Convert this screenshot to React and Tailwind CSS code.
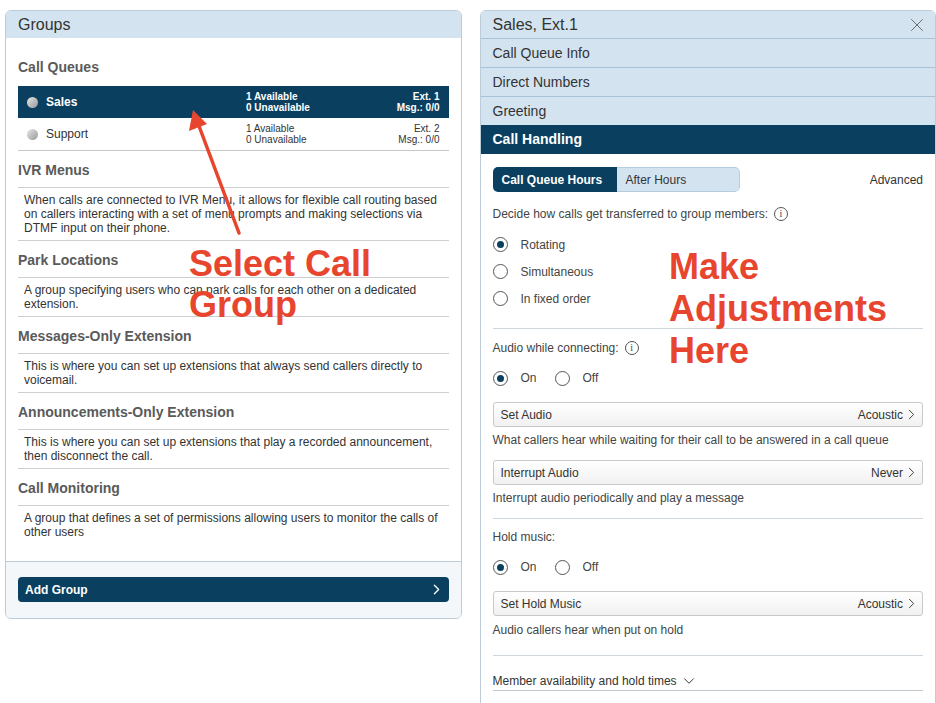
import { ChevronRight, ChevronDown, X } from 'lucide-react'

const queues = [
  { name: 'Sales', ext: 'Ext. 1', active: true },
  { name: 'Support', ext: 'Ext. 2', active: false },
]

const sections = [
  {
    title: 'IVR Menus',
    text: 'When calls are connected to IVR Menu, it allows for flexible call routing based on callers interacting with a set of menu prompts and making selections via DTMF input on their phone.',
  },
  {
    title: 'Park Locations',
    text: 'A group specifying users who can park calls for each other on a dedicated extension.',
  },
  {
    title: 'Messages-Only Extension',
    text: 'This is where you can set up extensions that always send callers directly to voicemail.',
  },
  {
    title: 'Announcements-Only Extension',
    text: 'This is where you can set up extensions that play a recorded announcement, then disconnect the call.',
  },
  {
    title: 'Call Monitoring',
    text: 'A group that defines a set of permissions allowing users to monitor the calls of other users',
  },
]

function Radio({ checked }) {
  return (
    <span className="w-[15px] h-[15px] rounded-full border border-[#555] bg-white flex items-center justify-center shrink-0">
      {checked && <span className="w-[7px] h-[7px] rounded-full bg-[#0b3f5f]" />}
    </span>
  )
}

function InfoIcon() {
  return (
    <span className="ml-[6px] w-[14px] h-[14px] rounded-full border border-[#555] inline-flex items-center justify-center text-[10px] leading-none text-[#444] font-['Liberation_Serif',serif]">
      i
    </span>
  )
}

function OnOff() {
  return (
    <div className="flex items-center h-[26px]">
      <Radio checked />
      <span className="ml-[13px]">On</span>
      <span className="ml-[18px]"><Radio /></span>
      <span className="ml-[13px]">Off</span>
    </div>
  )
}

function SelectButton({ label, value }) {
  return (
    <div className="h-[25px] flex items-center justify-between px-[7px] border border-[#c9c9c9] rounded-[3px] bg-gradient-to-b from-white to-[#f1f1f1] text-[#333]">
      <span>{label}</span>
      <span className="flex items-center">
        {value}
        <ChevronRight size={17} strokeWidth={1.3} className="-mr-[5px]" />
      </span>
    </div>
  )
}

export default function App() {
  return (
    <div className="relative h-[703px] w-[936px] overflow-hidden bg-white font-['Liberation_Sans',Arial,sans-serif] text-[#333]">
      <div className="flex items-start pt-[10px] pl-[5px] gap-[18px]">
        {/* Groups panel */}
        <div className="w-[457px] border border-[#bccbd8] rounded-[6px] overflow-hidden bg-white">
          <div className="h-[27px] bg-[#d3e4f0] px-[12px] flex items-center text-[16px] text-[#333]">Groups</div>
          <div className="px-[12px] pb-[17px]">
            <div className="h-[48px] pt-[10px] flex items-center text-[14px] font-bold text-[#5a5a5a]">Call Queues</div>
            {queues.map((q) => (
              <div
                key={q.name}
                className={`flex items-center h-[32px] px-[9px] ${q.active ? 'bg-[#0b3f5f] text-white font-bold' : 'h-[33px] border-b border-[#c8c8c8] text-[#333]'}`}
              >
                <span className="w-[11px] h-[11px] rounded-full bg-gradient-to-br from-[#e6e6e6] to-[#9a9a9a]" />
                <span className="ml-[8px] w-[200px] text-[12px]">{q.name}</span>
                <div className="text-[10px] leading-[11px]">
                  <div>1 Available</div>
                  <div>0 Unavailable</div>
                </div>
                <div className="ml-auto text-right text-[10px] leading-[11px]">
                  <div>{q.ext}</div>
                  <div>Msg.: 0/0</div>
                </div>
              </div>
            ))}
            {sections.map((s, i) => (
              <div key={s.title}>
                <div className="h-[37px] pt-[2px] flex items-center text-[14px] font-bold text-[#5a5a5a] border-b border-[#cfcfcf]">{s.title}</div>
                <p className={`px-[6px] py-[5px] text-[12px] leading-[14px] text-[#333] ${i < sections.length - 1 ? 'border-b border-[#cfcfcf]' : ''}`}>
                  {s.text}
                </p>
              </div>
            ))}
          </div>
          <div className="border-t border-[#bccbd8] bg-[#f4f7fa] px-[12px] pt-[15px] pb-[16px]">
            <button className="w-full h-[25px] rounded-[4px] bg-[#0b3f5f] text-white text-[12px] font-bold flex items-center justify-between px-[7px]">
              <span>Add Group</span>
              <ChevronRight size={17} strokeWidth={1.8} className="-mr-[3px]" />
            </button>
          </div>
        </div>

        {/* Sales detail panel */}
        <div className="w-[457px] h-[760px] border border-[#bccbd8] rounded-t-[6px] overflow-hidden bg-white">
          <div className="h-[27px] bg-[#d3e4f0] px-[12px] flex items-center justify-between text-[16px] text-[#333]">
            <span>Sales, Ext.1</span>
            <X size={22} strokeWidth={0.9} className="text-[#555] -mr-[5px]" />
          </div>
          {['Call Queue Info', 'Direct Numbers', 'Greeting'].map((t) => (
            <div key={t} className="h-[29px] bg-[#d3e4f0] border-t border-[#a9c2d5] px-[12px] flex items-center text-[14px] text-[#333]">
              {t}
            </div>
          ))}
          <div className="h-[29px] bg-[#0b3f5f] px-[12px] flex items-center text-[14px] font-bold text-white">Call Handling</div>

          <div className="px-[12px] pt-[13px] text-[12px] text-[#444]">
            <div className="flex items-center justify-between">
              <div className="flex h-[25px] rounded-[5px] overflow-hidden">
                <span className="w-[124px] bg-[#0b3f5f] text-white font-bold flex items-center pl-[9px]">Call Queue Hours</span>
                <span className="w-[123px] bg-[#d3e4f0] border border-l-0 border-[#b6cde0] rounded-r-[5px] text-[#333] flex items-center pl-[9px]">After Hours</span>
              </div>
              <span className="text-[#333]">Advanced</span>
            </div>

            <div className="mt-[12px] h-[20px] flex items-center">
              Decide how calls get transferred to group members:
              <InfoIcon />
            </div>
            <div className="mt-[7px]">
              {['Rotating', 'Simultaneous', 'In fixed order'].map((o, i) => (
                <div key={o} className="h-[27px] flex items-center">
                  <Radio checked={i === 0} />
                  <span className="ml-[13px]">{o}</span>
                </div>
              ))}
            </div>
            <div className="mt-[16px] border-t border-[#cfd6dc]" />

            <div className="mt-[9px] h-[20px] flex items-center">
              Audio while connecting:
              <InfoIcon />
            </div>
            <div className="mt-[7px]"><OnOff /></div>
            <div className="mt-[11px]"><SelectButton label="Set Audio" value="Acoustic" /></div>
            <div className="mt-[3px] h-[20px] flex items-center">What callers hear while waiting for their call to be answered in a call queue</div>
            <div className="mt-[10px]"><SelectButton label="Interrupt Audio" value="Never" /></div>
            <div className="mt-[3px] h-[20px] flex items-center">Interrupt audio periodically and play a message</div>
            <div className="mt-[10px] border-t border-[#cfd6dc]" />

            <div className="mt-[8px] h-[20px] flex items-center">Hold music:</div>
            <div className="mt-[7px]"><OnOff /></div>
            <div className="mt-[11px]"><SelectButton label="Set Hold Music" value="Acoustic" /></div>
            <div className="mt-[4px] h-[20px] flex items-center">Audio callers hear when put on hold</div>
            <div className="mt-[15px] border-t border-[#cfd6dc]" />

            <div className="mt-[15px] h-[20px] flex items-center border-b border-[#bfc6cc] text-[#333]">
              Member availability and hold times
              <ChevronDown size={18} strokeWidth={1.3} className="ml-[3px]" />
            </div>
          </div>
        </div>
      </div>

      {/* Annotations */}
      <svg className="absolute left-0 top-0 pointer-events-none" width="936" height="703">
        <line x1="239" y1="233" x2="199" y2="126" stroke="#e8452e" strokeWidth="3.5" strokeLinecap="round" />
        <polygon points="193,110 189,131 207,124" fill="#e8452e" />
      </svg>
      <div className="absolute left-[189px] top-[243px] text-[36px] leading-[41px] font-bold text-[#e8452e] pointer-events-none">
        <div>Select Call</div>
        <div>Group</div>
      </div>
      <div className="absolute left-[669px] top-[246px] text-[36px] leading-[42px] font-bold text-[#e8452e] pointer-events-none">
        <div>Make</div>
        <div>Adjustments</div>
        <div>Here</div>
      </div>
    </div>
  )
}
